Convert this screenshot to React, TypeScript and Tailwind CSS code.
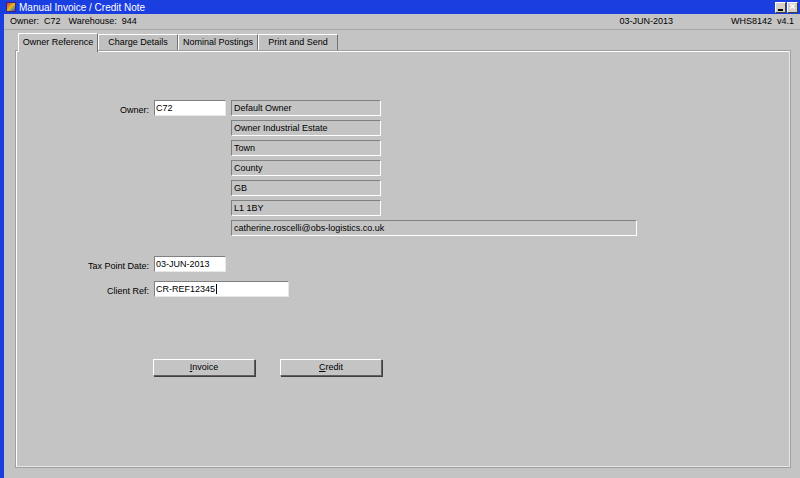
import React from 'react'

const font = { fontFamily: '"Liberation Sans", Arial, sans-serif' }

const ro = 'h-[16px] border border-t-[#808080] border-l-[#808080] border-b-white border-r-white bg-[#c4c4c4] px-[2px] leading-[14px]'
const edit = 'h-[16px] border border-t-[#808080] border-l-[#808080] border-b-[#e8e8e8] border-r-[#e8e8e8] bg-white px-[1px] leading-[14px]'

function Tab({ label, active }: { label: string; active?: boolean }) {
    return (
        <div className={`w-[80px] h-[17px] flex items-center justify-center border-t border-l border-t-white border-l-white border-r border-r-[#707070] ${active ? 'bg-[#c4c4c4] h-[19px] -mb-[1px] z-10' : 'bg-[#c0c0c0]'}`}>
            {label}
        </div>
    )
}

function Btn({ children }: { children: React.ReactNode }) {
    return (
        <div className="w-[102px] h-[17px] flex items-center justify-center border border-t-white border-l-white border-b-[#606060] border-r-[#606060] bg-[#c4c4c4] shadow-[1px_1px_0_#404040]">
            {children}
        </div>
    )
}

export default function App() {
    return (
        <div style={font} className="w-[800px] h-[478px] bg-[#1a3ee0] text-[9px] text-black flex flex-col overflow-hidden">
            <div className="h-[14px] flex items-center pl-[6px] pr-[2px] text-white text-[10px]">
                <div className="w-[10px] h-[10px] mr-[3px] bg-[linear-gradient(135deg,#e03030,#d8c020,#3050c0)] border border-[#402080]" />
                <span>Manual Invoice / Credit Note</span>
                <div className="ml-auto flex gap-[1px]">
                    <div className="w-[11px] h-[11px] bg-[#d4d0c8] border border-t-white border-l-white border-b-[#404040] border-r-[#404040] flex items-end justify-center pb-[1px]"><div className="w-[5px] h-[2px] bg-black" /></div>
                    <div className="w-[11px] h-[11px] bg-[#d4d0c8] border border-t-white border-l-white border-b-[#404040] border-r-[#404040] flex items-center justify-center text-[10px] font-bold leading-none">×</div>
                </div>
            </div>
            <div className="flex-1 ml-[4px] bg-[#c4c4c4] flex flex-col">
                <div className="h-[16px] flex items-center pl-[6px] pr-[6px] border-b border-b-[#a8a8a8]">
                    <span className="mr-[8px]">Owner:&nbsp; C72</span>
                    <span>Warehouse:&nbsp; 944</span>
                    <span className="ml-auto mr-[58px]">03-JUN-2013</span>
                    <span>WHS8142&nbsp; v4.1</span>
                </div>
                <div className="flex pl-[14px] mt-[3px] items-end">
                    <Tab label="Owner Reference" active />
                    <Tab label="Charge Details" />
                    <Tab label="Nominal Postings" />
                    <Tab label="Print and Send" />
                </div>
                <div className="ml-[12px] mr-[10px] mb-[11px] flex-1 border border-t-white border-l-white border-b-[#e8e8e0] border-r-[#e8e8e0] outline outline-1 outline-[#a0a0a0] bg-[#c4c4c4] pt-[48px]">
                    <div className="grid grid-cols-[132px_1fr] gap-x-[5px]">
                        <div className="text-right leading-[16px] pt-[2px]">Owner:</div>
                        <div className="flex gap-[5px]">
                            <div className={`${edit} w-[72px]`}>C72</div>
                            <div className="flex flex-col gap-[4px]">
                                <div className={`${ro} w-[150px]`}>Default Owner</div>
                                <div className={`${ro} w-[150px]`}>Owner Industrial Estate</div>
                                <div className={`${ro} w-[150px]`}>Town</div>
                                <div className={`${ro} w-[150px]`}>County</div>
                                <div className={`${ro} w-[150px]`}>GB</div>
                                <div className={`${ro} w-[150px]`}>L1 1BY</div>
                                <div className={`${ro} w-[406px]`}>catherine.roscelli@obs-logistics.co.uk</div>
                            </div>
                        </div>
                        <div className="text-right leading-[16px] pt-[2px] mt-[20px]">Tax Point Date:</div>
                        <div className={`${edit} w-[72px] mt-[20px]`}>03-JUN-2013</div>
                        <div className="text-right leading-[16px] pt-[2px] mt-[7px]">Client Ref:</div>
                        <div className={`${edit} w-[135px] mt-[7px]`}>CR-REF12345<span className="border-l border-black ml-[1px]" /></div>
                        <div />
                        <div className="flex gap-[25px] mt-[60px] -ml-[1px]">
                            <Btn><span className="underline">I</span>nvoice</Btn>
                            <Btn><span className="underline">C</span>redit</Btn>
                        </div>
                    </div>
                </div>
            </div>
        </div>
    )
}
